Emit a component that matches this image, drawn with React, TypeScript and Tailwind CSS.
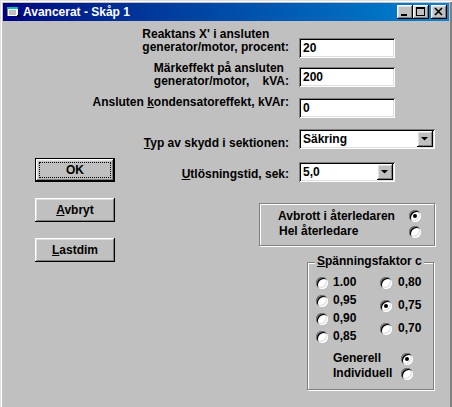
import React from "react";

// classic 3D borders
const raised =
    "bg-[#c0c0c0] shadow-[inset_-1px_-1px_0_#000,inset_1px_1px_0_#fff,inset_-2px_-2px_0_#808080,inset_2px_2px_0_#dfdfdf]";
const sunken =
    "bg-white shadow-[inset_1px_1px_0_#808080,inset_-1px_-1px_0_#fff,inset_2px_2px_0_#000,inset_-2px_-2px_0_#dfdfdf]";
const etched = "border border-[#808080] shadow-[inset_1px_1px_0_#fff,1px_1px_0_#fff]";

const Radio = ({ checked }: { checked?: boolean }) => (
    <span
        className={`inline-flex h-3 w-3 shrink-0 items-center justify-center rounded-full ${sunken}`}
    >
        {checked && <span className="h-1 w-1 rounded-full bg-black" />}
    </span>
);

const TextBox = ({ value, className }: { value: string; className?: string }) => (
    <div className={`flex h-[20px] items-center pl-[4px] ${sunken} ${className ?? ""}`}>
        {value}
    </div>
);

const Combo = ({ value, className }: { value: string; className?: string }) => (
    <div className={`flex h-[20px] items-center p-[2px] ${sunken} ${className ?? ""}`}>
        <span className="flex-1 pl-[2px]">{value}</span>
        <span className={`flex h-[16px] w-[16px] items-center justify-center ${raised}`}>
            <svg width="16" height="16" viewBox="0 0 16 16">
                <polygon points="4,6 11,6 7.5,9.5" fill="#000" />
            </svg>
        </span>
    </div>
);

const Button = ({ children, isDefault, className }: { children: React.ReactNode; isDefault?: boolean; className?: string }) => (
    <div
        className={`relative flex h-[24px] w-[80px] items-center justify-center ${className ?? ""} ${
            isDefault ? "border border-black" : ""
        }`}
    >
        <div className={`absolute inset-0 ${raised}`} />
        {isDefault && <div className="absolute inset-[3px] border border-dotted border-black" />}
        <span className="relative">{children}</span>
    </div>
);

const Label = ({ children, width }: { children: React.ReactNode; width: string }) => (
    <div className={`flex justify-end ${width}`}>
        <div className="whitespace-pre leading-[13px]">{children}</div>
    </div>
);

const TitleButton = ({ children, className }: { children: React.ReactNode; className?: string }) => (
    <span className={`flex h-[14px] w-[16px] ${raised} ${className ?? ""}`}>
        <svg width="16" height="14" viewBox="0 0 16 14" shapeRendering="crispEdges">
            {children}
        </svg>
    </span>
);

const TitleBar = () => (
    <div className="mx-[3px] mt-[3px] flex h-[18px] items-center bg-linear-to-r from-[#000080] to-[#1084d0] pl-[3px] pr-[2px]">
        <svg width="14" height="14" viewBox="0 0 14 14" shapeRendering="crispEdges">
            <rect x="1" y="2" width="11" height="9" fill="#fff" />
            <rect x="1" y="2" width="11" height="2" fill="#00c0c0" />
            <rect x="1" y="2" width="1" height="9" fill="#808080" />
            <rect x="3" y="5" width="7" height="5" fill="#c0c0c0" />
            <rect x="11" y="10" width="3" height="2" fill="#000" />
        </svg>
        <span className="ml-[3px] text-white">Avancerat - Skåp 1</span>
        <div className="ml-auto flex items-center">
            <TitleButton>
                <rect x="4" y="9" width="6" height="2" fill="#000" />
            </TitleButton>
            <TitleButton>
                <rect x="3" y="2" width="9" height="2" fill="#000" />
                <rect x="3" y="2" width="1" height="9" fill="#000" />
                <rect x="11" y="2" width="1" height="9" fill="#000" />
                <rect x="3" y="10" width="9" height="1" fill="#000" />
            </TitleButton>
            <TitleButton className="ml-[2px]">
                <path d="M4 3l7 7M11 3l-7 7" stroke="#000" strokeWidth="1.6" shapeRendering="auto" />
            </TitleButton>
        </div>
    </div>
);

const col1 = [
    { v: "1.00" },
    { v: "0,95" },
    { v: "0,90" },
    { v: "0,85" },
];
const col2 = [
    { v: "0,80" },
    { v: "0,75", checked: true },
    { v: "0,70" },
];

export default function App() {
    return (
        <div className="h-[407px] w-[452px] overflow-hidden bg-[#c0c0c0] font-['Liberation_Sans',Arial,sans-serif] text-[12px] font-bold leading-[13px] text-black shadow-[inset_1px_1px_0_#dfdfdf,inset_2px_2px_0_#fff,inset_-2px_0_0_#808080,inset_-1px_0_0_#404040]">
            <TitleBar />

            {/* input rows */}
            <div className="mt-[7px] flex items-start">
                <Label width="w-[289px]">
                    {"Reaktans X' i ansluten\ngenerator/motor, procent:"}
                </Label>
                <TextBox value="20" className="ml-[10px] mt-[10px] w-[96px]" />
            </div>
            <div className="mt-[4px] flex items-start">
                <Label width="w-[289px]">
                    {"Märkeffekt på ansluten\ngenerator/motor,    kVA:"}
                </Label>
                <TextBox value="200" className="ml-[10px] mt-[5px] w-[96px]" />
            </div>
            <div className="mt-[8px] flex items-start">
                <Label width="w-[289px]">
                    <>
                        Ansluten <u>k</u>ondensatoreffekt, kVAr:
                    </>
                </Label>
                <TextBox value="0" className="ml-[10px] mt-[2px] w-[96px]" />
            </div>
            <div className="mt-[11px] flex items-start">
                <div className="mt-[8px]">
                    <Label width="w-[289px]">
                        <>
                            <u>T</u>yp av skydd i sektionen:
                        </>
                    </Label>
                </div>
                <Combo value="Säkring" className="ml-[10px] w-[136px]" />
            </div>

            <div className="flex items-start">
                {/* buttons */}
                <div className="flex flex-col pl-[35px]">
                    <Button isDefault className="mt-[8px]">
                        OK
                    </Button>
                    <Button className="mt-[16px]">
                        <u>A</u>vbryt
                    </Button>
                    <Button className="mt-[16px]">
                        <u>L</u>astdim
                    </Button>
                </div>

                <div className="flex flex-col">
                    <div className="mt-[12px] flex items-start">
                        <div className="mt-[6px]">
                            <Label width="w-[174px]">
                                <>
                                    <u>U</u>tlösningstid, sek:
                                </>
                            </Label>
                        </div>
                        <Combo value="5,0" className="ml-[10px] w-[96px]" />
                    </div>

                    {/* återledare */}
                    <div className={`ml-[144px] mt-[21px] h-[43px] w-[176px] pl-[18px] pt-[6px] ${etched}`}>
                        <div className="flex h-[13px] items-start">
                            <span className="w-[131px]">Avbrott i återledaren</span>
                            <Radio checked />
                        </div>
                        <div className="mt-[2px] flex h-[13px] items-start">
                            <span className="w-[131px] pl-[1px]">Hel återledare</span>
                            <span className="mt-[1px] flex">
                                <Radio />
                            </span>
                        </div>
                    </div>

                    {/* Spänningsfaktor */}
                    <div className={`relative ml-[192px] mt-[16px] h-[128px] w-[127px] pl-[8px] pt-[13px] ${etched}`}>
                        <span className="absolute left-[7px] top-[-8px] bg-[#c0c0c0] px-[2px]">
                            <u>S</u>pänningsfaktor c
                        </span>
                        <div className="flex">
                            <div className="flex w-[64px] flex-col gap-[5px]">
                                {col1.map((r) => (
                                    <div key={r.v} className="flex h-[13px] items-center gap-[5px]">
                                        <Radio />
                                        <span>{r.v}</span>
                                    </div>
                                ))}
                            </div>
                            <div className="flex flex-col gap-[10px]">
                                {col2.map((r) => (
                                    <div key={r.v} className="flex h-[13px] items-center gap-[6px]">
                                        <Radio checked={r.checked} />
                                        <span>{r.v}</span>
                                    </div>
                                ))}
                            </div>
                        </div>
                        <div className="mt-[9px] pl-[17px]">
                            <div className="flex h-[13px] items-center">
                                <span className="w-[68px]">Generell</span>
                                <Radio checked />
                            </div>
                            <div className="mt-[2px] flex h-[13px] items-center">
                                <span className="w-[68px]">Individuell</span>
                                <Radio />
                            </div>
                        </div>
                    </div>
                </div>
            </div>
        </div>
    );
}
